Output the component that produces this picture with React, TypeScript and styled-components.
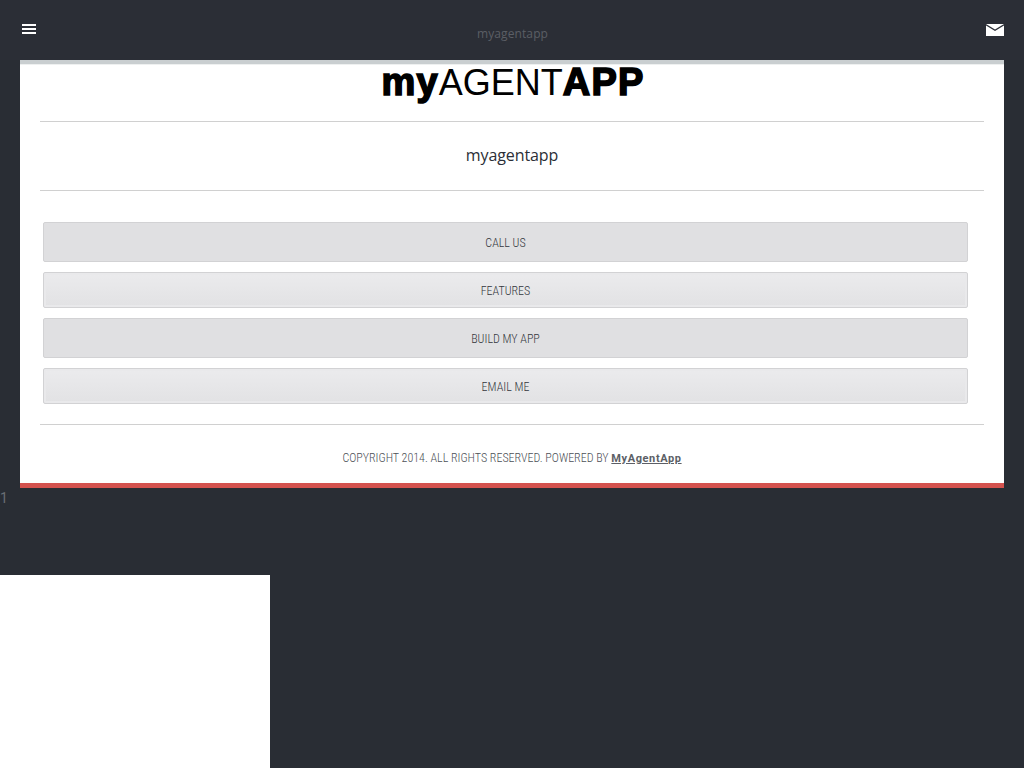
import React from 'react'
import styled, { createGlobalStyle } from 'styled-components'

const GlobalStyle = createGlobalStyle`
  html, body {
    margin: 0;
    padding: 0;
    height: 100%;
    overflow: hidden;
    background-color: #292d34;
  }
`

const links = [
  { label: 'CALL US', flat: true },
  { label: 'FEATURES', flat: false },
  { label: 'BUILD MY APP', flat: true },
  { label: 'EMAIL ME', flat: false },
]

const App = () => {
  return (
    <Page>
      <GlobalStyle />
      <Header>
        <MenuLink href="#" aria-label="menu">
          <svg width="14" height="10" viewBox="0 0 14 10">
            <path fill="#fff" d="M0 0h14v2H0zM0 4h14v2H0zM0 8h14v2H0z" />
          </svg>
        </MenuLink>
        <HeaderTitle>myagentapp</HeaderTitle>
        <MailLink href="#" aria-label="mail">
          <svg width="18" height="12" viewBox="0 0 18 12">
            <path fill="#fff" d="M0 0h18L9 5.4z" />
            <path fill="#fff" d="M0 1.6l9 5.4 9-5.4V12H0z" />
          </svg>
        </MailLink>
      </Header>
      <Card>
        <Logo>
          <b>my</b>AGENT<b>APP</b>
        </Logo>
        <Rule />
        <Title>myagentapp</Title>
        <Rule />
        <ButtonList>
          {links.map((link) => (
            <LinkButton key={link.label} href="#" $flat={link.flat}>
              {link.label}
            </LinkButton>
          ))}
        </ButtonList>
        <Rule />
        <Footer>
          COPYRIGHT 2014. ALL RIGHTS RESERVED. POWERED BY <a href="#">MyAgentApp</a>
        </Footer>
      </Card>
      <PageNumber>1</PageNumber>
      <WhiteBox />
    </Page>
  )
}

const Page = styled.div`
  height: 768px;
  overflow: hidden;
  background-color: #292d34;
`

const Header = styled.header`
  display: flex;
  align-items: center;
  justify-content: space-between;
  height: 60px;
  padding: 0 20px 0 22px;
  box-sizing: border-box;
  background-color: #2b2e36;
`

const MenuLink = styled.a`
  display: flex;
  margin-bottom: 2px;
`

const MailLink = styled.a`
  display: flex;
`

const HeaderTitle = styled.span`
  font-family: 'Open Sans', sans-serif;
  font-size: 12px;
  letter-spacing: 0.1px;
  color: #5b5e65;
  padding: 6px 0 0 3px;
`

const Card = styled.main`
  margin: 0 20px;
  height: 419px;
  background-color: #fff;
  border-top: 4px solid #c9ced0;
  border-bottom: 5px solid #d4524e;
  box-shadow: inset 0 1px 0 #eef0f0;
`

const Logo = styled.div`
  height: 57px;
  padding-left: 2px;
  box-sizing: border-box;
  text-align: center;
  font-family: 'Liberation Sans', Arial, sans-serif;
  font-size: 36px;
  line-height: 36px;
  color: #000;

  b {
    font-size: 38px;
    font-weight: 700;
    -webkit-text-stroke: 1.6px #000;
    letter-spacing: 1.2px;
  }
`

const Rule = styled.hr`
  margin: 0 20px;
  height: 1px;
  border: 0;
  background-color: #d0d0d0;
`

const Title = styled.h1`
  margin: 0;
  height: 68px;
  line-height: 66px;
  text-align: center;
  font-family: 'Open Sans', sans-serif;
  font-size: 16px;
  font-weight: 400;
  letter-spacing: -0.1px;
  color: #2b2e36;
`

const ButtonList = styled.nav`
  display: flex;
  flex-direction: column;
  gap: 10px;
  padding: 31px 36px 20px 23px;
`

const LinkButton = styled.a<{ $flat: boolean }>`
  display: flex;
  align-items: center;
  justify-content: center;
  height: ${(p) => (p.$flat ? '40px' : '36px')};
  padding-top: 1px;
  box-sizing: border-box;
  border: 1px solid #d2d2d4;
  border-radius: 2px;
  background: ${(p) => (p.$flat ? '#e0e0e2' : 'linear-gradient(#ebebed, #e2e2e4)')};
  box-shadow: ${(p) => (p.$flat ? 'none' : 'inset 0 0 0 2px #e9e9eb')};
  font-family: 'Roboto', sans-serif;
  font-stretch: 75%;
  font-size: 12px;
  font-weight: 300;
  color: #33363c;
  text-decoration: none;
`

const Footer = styled.footer`
  padding-top: 25px;
  text-align: center;
  font-family: 'Roboto', sans-serif;
  font-stretch: 75%;
  font-size: 12px;
  font-weight: 300;
  line-height: 16px;
  color: #4c4f56;

  a {
    font-size: 11px;
    font-weight: 700;
    font-stretch: 100%;
    letter-spacing: 0.6px;
    color: #5c5f66;
  }
`

const PageNumber = styled.div`
  height: 85px;
  padding-top: 2px;
  font-family: 'Roboto', sans-serif;
  font-size: 14px;
  line-height: 16px;
  color: #6a6d74;
`

const WhiteBox = styled.div`
  width: 270px;
  height: 193px;
  background-color: #fff;
`

export default App
